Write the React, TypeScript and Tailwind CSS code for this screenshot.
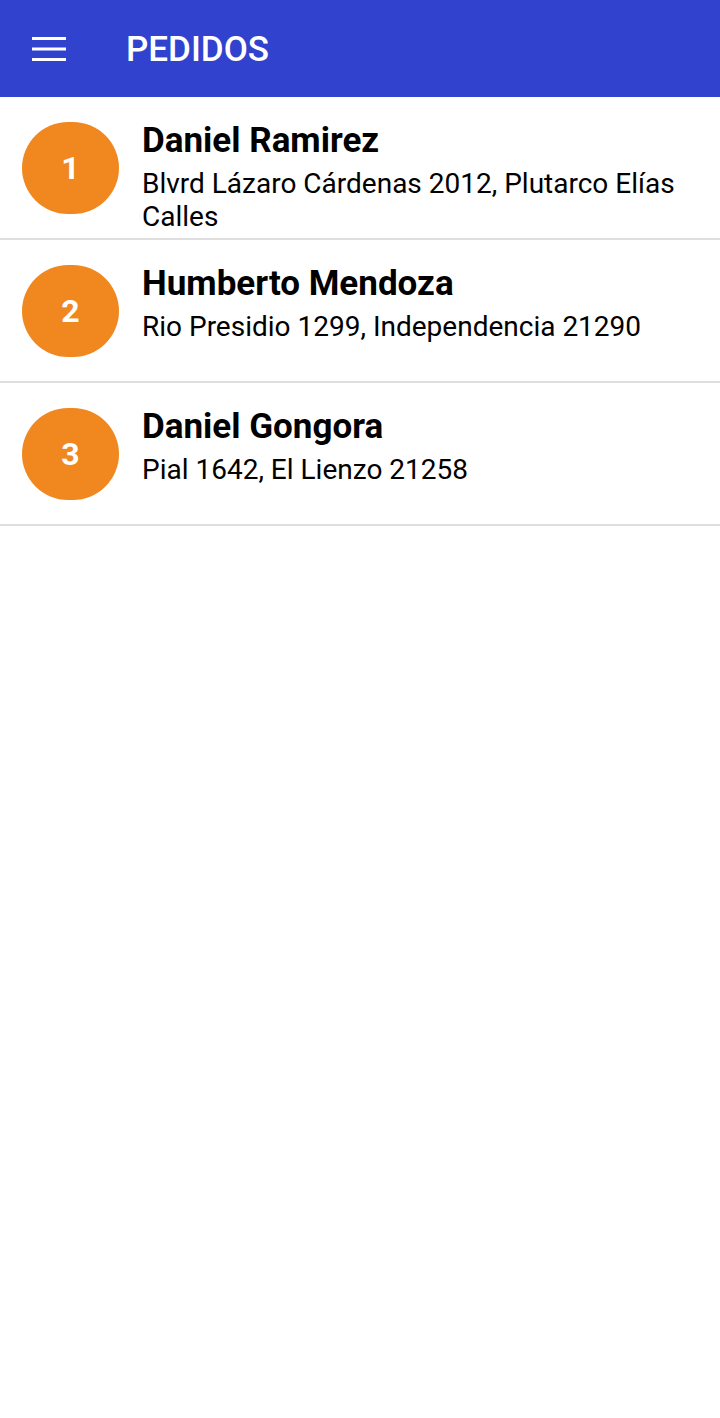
import React from 'react';

interface Pedido {
  id: number;
  name: string;
  address: string;
}

const pedidos: Pedido[] = [
  { id: 1, name: 'Daniel Ramirez', address: 'Blvrd Lázaro Cárdenas 2012, Plutarco Elías Calles' },
  { id: 2, name: 'Humberto Mendoza', address: 'Rio Presidio 1299, Independencia 21290' },
  { id: 3, name: 'Daniel Gongora', address: 'Pial 1642, El Lienzo 21258' },
];

const MenuIcon = () => (
  <svg width="34" height="24" viewBox="0 0 34 24" className="block">
    <rect x="0" y="0" width="34" height="3" fill="white" />
    <rect x="0" y="10.5" width="34" height="3" fill="white" />
    <rect x="0" y="21" width="34" height="3" fill="white" />
  </svg>
);

export default function App() {
  return (
    <div className="min-h-[1418px] bg-white font-['Roboto',sans-serif]">
      {/* Header */}
      <header className="h-[97px] bg-[#3142ce] flex items-center px-[32px]">
        <MenuIcon />
        <h1 className="ml-[60px] mt-[3px] text-white text-[35px] font-medium">PEDIDOS</h1>
      </header>

      {/* List */}
      <ul>
        {pedidos.map((p) => (
          <li
            key={p.id}
            className="h-[143px] flex items-start border-b-2 border-[#dedede] pl-[22px] pr-3"
          >
            <div className="mt-[25px] w-[97px] h-[92px] shrink-0 rounded-full bg-[#f0881f] flex items-center justify-center text-white text-[32px] font-bold">
              {p.id}
            </div>
            <div className="ml-[23px] pt-[22px] min-w-0">
              <div className="text-black text-[35px] font-bold leading-[44px]">{p.name}</div>
              <div className="mt-[4px] text-black text-[28px] leading-[33px]">{p.address}</div>
            </div>
          </li>
        ))}
      </ul>
    </div>
  );
}
